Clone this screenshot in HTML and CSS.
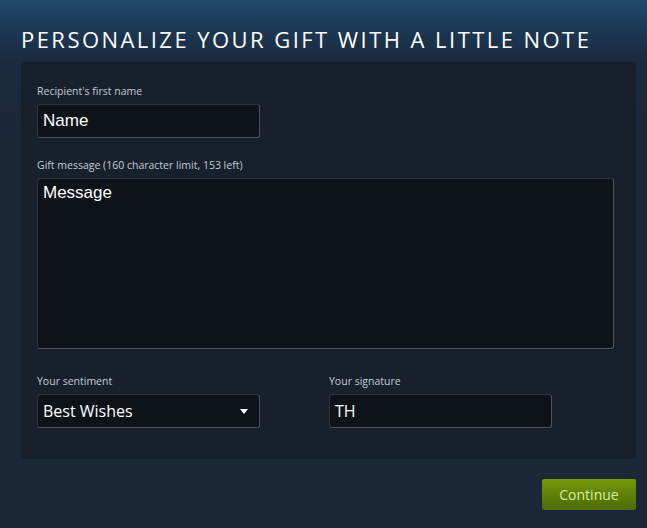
FILE: index.html
```html
<!DOCTYPE html>
<html>
<head>
<meta charset="utf-8">
<link rel="stylesheet" href="styles.css">
</head>
<body>
<div class="page">
  <h1 class="title">PERSONALIZE YOUR GIFT WITH A LITTLE NOTE</h1>
  <div class="panel">
    <div class="field">
      <div class="label">Recipient's first name</div>
      <div class="input short"><span class="val">Name</span></div>
    </div>
    <div class="field">
      <div class="label">Gift message (160 character limit, 153 left)</div>
      <div class="input area"><span class="val">Message</span></div>
    </div>
    <div class="row">
      <div class="col">
        <div class="label">Your sentiment</div>
        <div class="input short select"><span class="val alt">Best Wishes</span><span class="arrow"></span></div>
      </div>
      <div class="col">
        <div class="label">Your signature</div>
        <div class="input short"><span class="val alt">TH</span></div>
      </div>
    </div>
  </div>
  <div class="actions">
    <div class="btn">Continue</div>
  </div>
</div>
</body>
</html>
```

FILE: styles.css
```css
html, body { margin: 0; padding: 0; }
body {
  width: 647px;
  height: 528px;
  overflow: hidden;
  background: linear-gradient(180deg, #1f4a6b 0px, #1c3a56 25px, #1b2a40 62px, #1b2838 140px, #1b2838 100%);
  font-family: "Open Sans", "Liberation Sans", sans-serif;
}
.page { padding: 25px 11px 0 21px; }
.title {
  margin: 0;
  height: 37px;
  font-family: "Open Sans", sans-serif;
  font-weight: 400;
  font-size: 22px;
  line-height: 28px;
  letter-spacing: 2.45px;
  color: #ffffff;
}
.panel {
  background: #18202c;
  border-radius: 2px;
  padding: 22px 22px 31px 16px;
  height: 344px;
}
.label {
  font-family: "Open Sans", sans-serif;
  font-size: 10.5px;
  line-height: 14px;
  color: #c2ccd6;
  height: 20px;
}
.field { margin-bottom: 20px; }
.input {
  box-sizing: border-box;
  background: #0e131a;
  border-radius: 3px;
  border: 1px solid #2b3440;
  border-right-color: #4a5563;
  border-bottom-color: #4a5563;
  display: flex;
  align-items: center;
  padding: 0 5px;
  position: relative;
}
.short { width: 223px; height: 34px; }
.area { width: 577px; height: 171px; align-items: flex-start; padding-top: 4px; }
.val {
  font-family: "Liberation Sans", Arial, sans-serif;
  font-size: 17px;
  color: #ffffff;
}
.val.alt { font-family: "Open Sans", sans-serif; font-size: 16px; }
.row { display: flex; gap: 69px; margin-top: 25px; }
.row .label { height: 20px; }
.arrow {
  position: absolute;
  right: 11px;
  top: 14px;
  width: 0; height: 0;
  border-left: 4px solid transparent;
  border-right: 4px solid transparent;
  border-top: 5px solid #ffffff;
}
.actions { display: flex; justify-content: flex-end; padding-top: 20px; }
.btn {
  width: 94px;
  height: 31px;
  border-radius: 2px;
  background: linear-gradient(180deg, #789a0a 0%, #5c7c07 60%, #4d6a05 100%);
  color: #d6f0a0;
  font-family: "Open Sans", sans-serif;
  font-size: 14px;
  line-height: 31px;
  text-align: center;
}
```
